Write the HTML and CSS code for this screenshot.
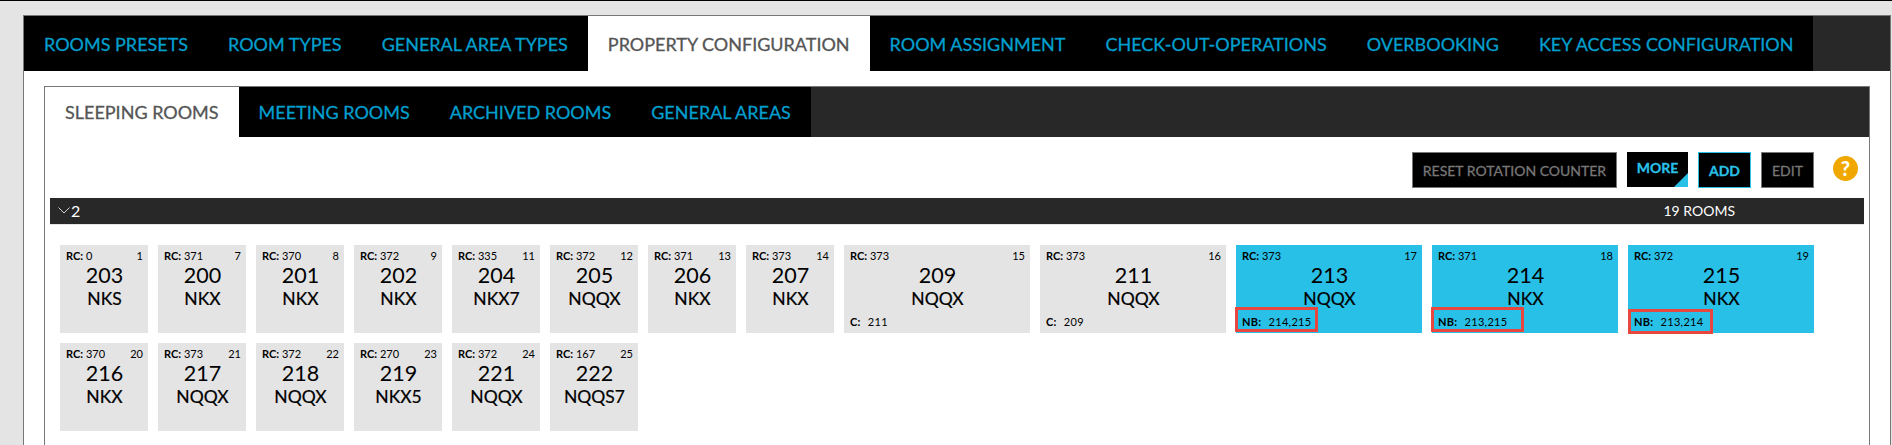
FILE: index.html
```html
<!DOCTYPE html>
<html lang="en">
<head>
<meta charset="utf-8">
<title>Property Configuration</title>
<link rel="stylesheet" href="styles.css">
</head>
<body>
<div class="panel">
  <nav class="tabs main-tabs">
    <a class="tab">ROOMS PRESETS</a>
    <a class="tab">ROOM TYPES</a>
    <a class="tab">GENERAL AREA TYPES</a>
    <a class="tab active">PROPERTY CONFIGURATION</a>
    <a class="tab">ROOM ASSIGNMENT</a>
    <a class="tab">CHECK-OUT-OPERATIONS</a>
    <a class="tab">OVERBOOKING</a>
    <a class="tab">KEY ACCESS CONFIGURATION</a>
  </nav>
  <div class="inner">
    <nav class="tabs sub-tabs">
      <a class="tab active">SLEEPING ROOMS</a>
      <a class="tab">MEETING ROOMS</a>
      <a class="tab">ARCHIVED ROOMS</a>
      <a class="tab">GENERAL AREAS</a>
    </nav>
    <div class="toolbar">
      <button class="btn reset">RESET ROTATION COUNTER</button>
      <button class="btn more">MORE</button>
      <button class="btn add">ADD</button>
      <button class="btn edit">EDIT</button>
      <span class="help">?</span>
    </div>
    <div class="group-bar">
      <span class="group-name"><svg class="chev" viewBox="0 0 12 7" width="12" height="7"><path d="M.5.5 6 6l5.500-5.500" fill="none" stroke="#fff" stroke-width=".8"/></svg>2</span>
      <span class="count">19 ROOMS</span>
    </div>
    <div class="rooms">
      <div class="room"><div class="top"><span><b>RC:</b> 0</span><span>1</span></div><div class="num">203</div><div class="type">NKS</div></div>
      <div class="room"><div class="top"><span><b>RC:</b> 371</span><span>7</span></div><div class="num">200</div><div class="type">NKX</div></div>
      <div class="room"><div class="top"><span><b>RC:</b> 370</span><span>8</span></div><div class="num">201</div><div class="type">NKX</div></div>
      <div class="room"><div class="top"><span><b>RC:</b> 372</span><span>9</span></div><div class="num">202</div><div class="type">NKX</div></div>
      <div class="room"><div class="top"><span><b>RC:</b> 335</span><span>11</span></div><div class="num">204</div><div class="type">NKX7</div></div>
      <div class="room"><div class="top"><span><b>RC:</b> 372</span><span>12</span></div><div class="num">205</div><div class="type">NQQX</div></div>
      <div class="room"><div class="top"><span><b>RC:</b> 371</span><span>13</span></div><div class="num">206</div><div class="type">NKX</div></div>
      <div class="room"><div class="top"><span><b>RC:</b> 373</span><span>14</span></div><div class="num">207</div><div class="type">NKX</div></div>
      <div class="room wide"><div class="top"><span><b>RC:</b> 373</span><span>15</span></div><div class="num">209</div><div class="type">NQQX</div><div class="note"><b>C:</b> 211</div></div>
      <div class="room wide"><div class="top"><span><b>RC:</b> 373</span><span>16</span></div><div class="num">211</div><div class="type">NQQX</div><div class="note"><b>C:</b> 209</div></div>
      <div class="room wide sel"><div class="top"><span><b>RC:</b> 373</span><span>17</span></div><div class="num">213</div><div class="type">NQQX</div><div class="note"><b>NB:</b> 214,215</div><i class="mark m1"></i></div>
      <div class="room wide sel"><div class="top"><span><b>RC:</b> 371</span><span>18</span></div><div class="num">214</div><div class="type">NKX</div><div class="note"><b>NB:</b> 213,215</div><i class="mark m2"></i></div>
      <div class="room wide sel"><div class="top"><span><b>RC:</b> 372</span><span>19</span></div><div class="num">215</div><div class="type">NKX</div><div class="note"><b>NB:</b> 213,214</div><i class="mark m3"></i></div>
      <div class="room"><div class="top"><span><b>RC:</b> 370</span><span>20</span></div><div class="num">216</div><div class="type">NKX</div></div>
      <div class="room"><div class="top"><span><b>RC:</b> 373</span><span>21</span></div><div class="num">217</div><div class="type">NQQX</div></div>
      <div class="room"><div class="top"><span><b>RC:</b> 372</span><span>22</span></div><div class="num">218</div><div class="type">NQQX</div></div>
      <div class="room"><div class="top"><span><b>RC:</b> 270</span><span>23</span></div><div class="num">219</div><div class="type">NKX5</div></div>
      <div class="room"><div class="top"><span><b>RC:</b> 372</span><span>24</span></div><div class="num">221</div><div class="type">NQQX</div></div>
      <div class="room"><div class="top"><span><b>RC:</b> 167</span><span>25</span></div><div class="num">222</div><div class="type">NQQS7</div></div>
    </div>
  </div>
</div>
</body>
</html>
```
FILE: styles.css
```css
* { box-sizing: border-box; }
html, body { margin: 0; height: 100%; overflow: hidden; }
body {
  display: flex;
  flex-direction: column;
  padding: 14px 1px 0 23px;
  background: #e4e4e4;
  border-top: 1px solid #000;
  font-family: Lato, "Liberation Sans", sans-serif;
  color: #000;
}
.panel {
  flex: 1;
  display: flex;
  flex-direction: column;
  min-height: 0;
  background: #fff;
  border: 1px solid #777;
  border-bottom: 0;
}
.tabs { display: flex; background: #282828; }
.tab {
  display: flex;
  align-items: center;
  padding: 0 20px;
  background: #000;
  color: #009fce;
  font-size: 18px;
  -webkit-text-stroke: .3px currentColor;
}
.tab.active { background: #fff; color: #555; }
.main-tabs { height: 55px; }
.sub-tabs { height: 50px; }
.inner {
  flex: 1;
  min-height: 0;
  margin: 15px 20px 0 20px;
  border: 1px solid #777;
  border-bottom: 0;
}
.toolbar {
  display: flex;
  align-items: flex-start;
  justify-content: flex-end;
  gap: 10px;
  padding: 15px 11px 0 0;
  height: 61px;
}
.btn {
  height: 36px;
  padding: 0;
  background: #000;
  border: 1px solid #777;
  color: #777;
  font: 14px Lato, "Liberation Sans", sans-serif;
  -webkit-text-stroke: .3px currentColor;
}
.reset { width: 205px; }
.edit { width: 53px; }
.more {
  position: relative;
  width: 61px;
  height: 35px;
  padding-bottom: 4px;
  border: 0;
  color: #29c0e7;
  font-weight: 700;
}
.more::after {
  content: "";
  position: absolute;
  right: 0;
  bottom: 0;
  border-style: solid;
  border-width: 0 0 14px 14px;
  border-color: transparent transparent #29c0e7 transparent;
}
.add { width: 53px; border-color: #29c0e7; color: #29c0e7; font-weight: 700; }
.help {
  width: 25px;
  height: 25px;
  margin: 4px 0 0 9px;
  border-radius: 50%;
  background: #f0a800;
  color: #fff;
  font-size: 20px;
  font-weight: 900;
  line-height: 25px;
  text-align: center;
}
.group-bar {
  display: flex;
  align-items: center;
  justify-content: space-between;
  height: 26px;
  margin: 0 5px;
  padding-bottom: 1px;
  background: #282828;
  color: #fff;
  box-shadow: 0 1px 0 #e4e4e4;
}
.group-name { display: flex; align-items: center; padding-left: 8px; font-size: 16px; }
.chev { margin-right: 1px; }
.count { margin-right: 129px; font-size: 14px; }
.rooms {
  display: flex;
  flex-wrap: wrap;
  gap: 10px;
  padding: 21px 0 0 15px;
}
.room {
  position: relative;
  width: 88px;
  height: 88px;
  padding: 5px 5px 0 6px;
  background: #e4e4e4;
  text-align: center;
}
.wide { width: 186px; }
.sel { background: #29c0e7; }
.top {
  display: flex;
  justify-content: space-between;
  font-size: 11px;
  line-height: 12px;
  text-align: left;
}
.top b, .note b { font-weight: 700; }
.num { margin-top: 1px; font-size: 21.500px; line-height: 24px; }
.type { font-size: 17.500px; line-height: 24px; -webkit-text-stroke: .2px currentColor; }
.note {
  position: absolute;
  left: 6px;
  bottom: 5px;
  font-size: 11px;
  line-height: 12px;
  letter-spacing: .3px;
}
.note b { margin-right: 4px; }
.mark {
  position: absolute;
  left: -1px;
  height: 25px;
  border: 3px solid #e8473f;
}
.m1 { top: 62px; width: 83px; }
.m2 { top: 62px; width: 93px; }
.m3 { top: 64px; left: 0; width: 85px; }
```
